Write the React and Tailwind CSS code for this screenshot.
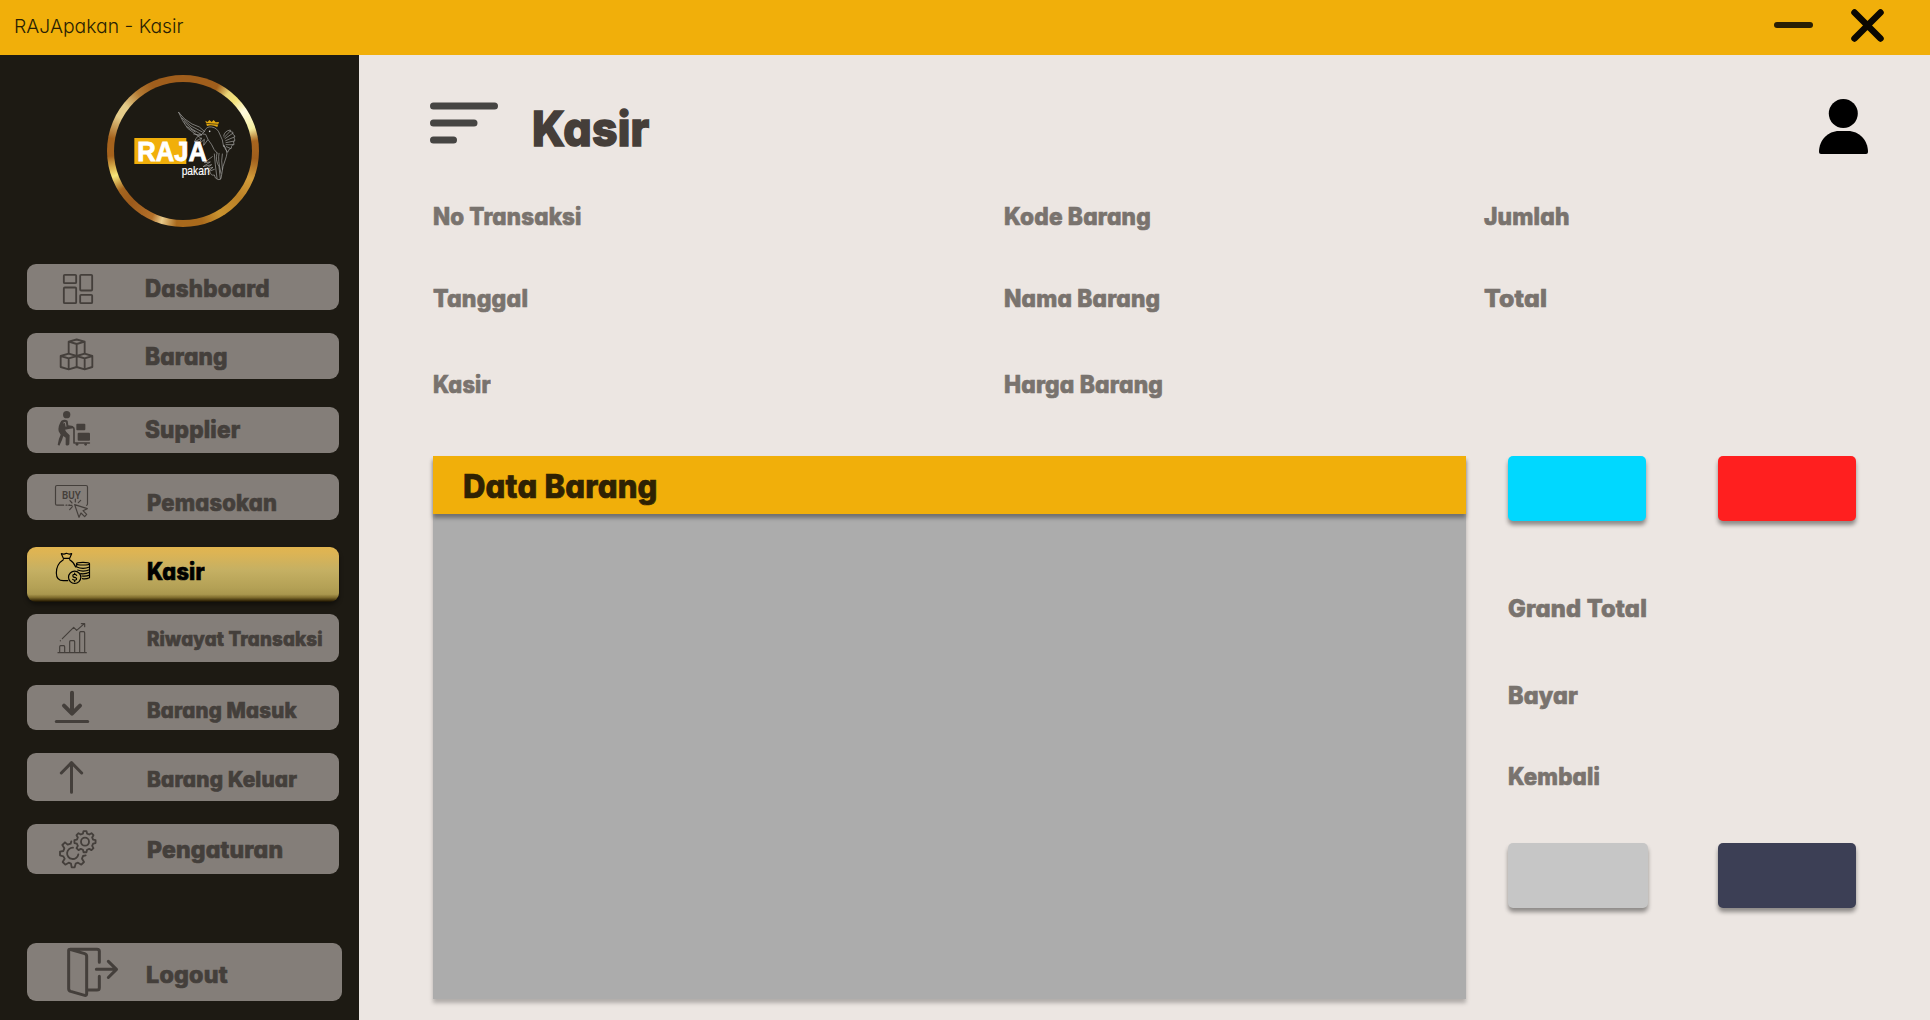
import React, { useLayoutEffect, useRef, useState } from "react";

/* Text condensed or widened so that its run fills the given width. */
function Label({ children, width, className = "" }) {
  const ref = useRef(null);
  const [scale, setScale] = useState(1);
  useLayoutEffect(() => {
    setScale(width / ref.current.offsetWidth);
  }, [children, width]);
  return (
    <span
      ref={ref}
      className={"inline-block origin-left self-start justify-self-start whitespace-nowrap pt-px pl-px leading-none " + className}
      style={{ transform: `scaleX(${scale})` }}
    >
      {children}
    </span>
  );
}

const bold = "font-extrabold tracking-[0.2px] [font-feature-settings:'cv11'] [-webkit-text-stroke:0.7px_currentColor] ";

function gear(cx, cy, r1, r2, teeth, rot) {
  const pts = [];
  const step = (Math.PI * 2) / teeth;
  for (let i = 0; i < teeth; i++) {
    const a = i * step + rot;
    [[-0.32, r1], [-0.17, r2], [0.17, r2], [0.32, r1]].forEach(([o, r]) => {
      pts.push((cx + r * Math.cos(a + o * step)).toFixed(1) + " " + (cy + r * Math.sin(a + o * step)).toFixed(1));
    });
  }
  return "M" + pts.join("L") + "Z";
}

const line = { fill: "none", stroke: "currentColor", strokeLinecap: "round", strokeLinejoin: "round" };

const DashboardIcon = ({ className }) => (
  <svg viewBox="186 69 96 96" className={className} {...line} strokeWidth="5.500">
    <rect x="191.500" y="74.500" width="37" height="25" rx="3" />
    <rect x="191.500" y="112.500" width="37" height="47" rx="3" />
    <rect x="240.500" y="74.500" width="36" height="47" rx="3" />
    <rect x="240.500" y="134.500" width="36" height="25" rx="3" />
  </svg>
);

const BoxesIcon = ({ className }) => (
  <svg viewBox="177 264 105 99" className={className} {...line} strokeWidth="5.500">
    <path d="M206 275L230 268.500L254 275V309M206 275V309M206 275L230 282L254 275M230 282V316" />
    <path d="M182 318L206 311L230 318L254 311L277 318V351L254 358L230 351L206 358L182 351ZM182 318L206 325L230 318L254 325L277 318M206 325V357M230 318V351M254 325V357" />
  </svg>
);

const SupplierIcon = ({ className }) => (
  <svg viewBox="171 60 102 111" className={className} fill="currentColor">
    <circle cx="200" cy="74" r="11" />
    <path d="M184 92Q194 86 203 92L205 106L215 107Q222 108 220 114L195 119L199 126L209 136L208 163Q203 170 197 164L197 143L190 138L186 150L178 167L173 164L177 146L182 134L176 124Q173 108 184 92Z" />
    <path d="M190 99L196 97L198 110" fill="none" stroke="#847e79" strokeWidth="3" />
    <path d="M205 112H218Q222 112 222 117V159H268" {...line} strokeWidth="5" />
    <rect x="229" y="101" width="27" height="20" rx="3" />
    <rect x="233" y="128" width="37" height="24" rx="3" />
    <circle cx="231" cy="163" r="4" />
    <circle cx="257" cy="163" r="4" />
  </svg>
);

const BuyIcon = ({ className }) => (
  <svg viewBox="162 282 105 105" className={className} {...line} strokeWidth="3.500">
    <path d="M191 345.500H171Q166.500 345.500 166.500 341V291Q166.500 286.500 171 286.500H258Q262.500 286.500 262.500 291V341Q262.500 344 260 346M198 345.500H201M206 345.500H209" />
    <path d="M224 344L262 356L249 362L260 373L254 380L243 369L237 382Z" />
    <path d="M226 327V336M210 332L216 339M242 331L235 338M208 346H216M217 350L209 359" />
    <text x="186" y="327" fontSize="33" fontWeight="600" textLength="56" lengthAdjust="spacingAndGlyphs" fill="currentColor" stroke="none" fontFamily="Roboto, sans-serif">BUY</text>
  </svg>
);

const MoneyIcon = ({ className }) => (
  <svg viewBox="165 66 108 99" className={className} {...line} strokeWidth="3.500">
    <path d="M190 85L184 71Q192 74 199 70Q207 74 215 71L209 85ZM190 89Q169 102 169 129Q169 152 190 152H203M209 89Q222 97 227 111" />
    <circle cx="224" cy="142" r="18.500" />
    <path d="M230 136Q224 130 219 135Q217 141 224 142Q232 144 229 149Q224 153 218 148M224 129V133M224 151V155" />
    <ellipse cx="249" cy="101" rx="19.500" ry="4" />
    <path d="M230 101V111Q249 119 268.500 111V101M268.500 111V119Q250 127 233 120M268.500 119V127Q256 133 242 131M268.500 127V135Q258 140 246 138M268.500 135V143Q258 148 247 146" />
  </svg>
);

const ChartIcon = ({ className }) => (
  <svg viewBox="171 276 90 96" className={className} {...line} strokeWidth="3.500">
    <path d="M174 368H259M179 368V350Q179 347 182 347H191Q194 347 194 350V368M209 368V335Q209 332 212 332H221Q224 332 224 335V368M239 368V308Q239 305 242 305H251Q254 305 254 308V368" />
    <path d="M187 326L221 292L230 301L253 281M244 281H254V290M181 332V332.500" />
  </svg>
);

const DownIcon = ({ className }) => (
  <svg viewBox="162 60 108 102" className={className} {...line} strokeWidth="12">
    <path d="M216 68V129M192 107L216 131L240 107" />
    <path d="M169 154.500H263" strokeWidth="9" />
  </svg>
);

const UpIcon = ({ className }) => (
  <svg viewBox="177 270 75 105" className={className} {...line} strokeWidth="9">
    <path d="M214.500 279V367M184 309L214.500 278L245 309" />
  </svg>
);

const GearsIcon = ({ className }) => (
  <svg viewBox="174 57 117 120" className={className} {...line} strokeWidth="5.500">
    <path d={gear(255, 95, 25, 32, 8, 0)} />
    <circle cx="255" cy="95" r="12" />
    <path d="M214 94L212 101L203 104L195 97L187 105L193 115L190 123L180 125V136L190 139L194 146L188 156L196 164L206 158L213 161L215 172H224L227 161L234 158L244 164L252 156L246 146L249 138L257 136" />
    <path d="M219 113A17 17 0 1 0 235 133" />
  </svg>
);

const LogoutIcon = ({ className }) => (
  <svg viewBox="198 411 159 153" className={className} {...line} strokeWidth="9">
    <path d="M206 421Q206 417 212 419L254 431Q260 433 260 439V551Q260 557 254 556L212 544Q206 542 206 536ZM210 417.500H291Q298 417.500 298 424V457M298 499V533Q298 540 291 540H264" />
    <path d="M289 478H349M325 454L349.500 478L325 502.500" />
  </svg>
);

const items = [
  { text: "Dashboard", w: 126, Icon: DashboardIcon, row: "h-[46px]", icon: "ml-[35px] mt-[9px] w-8 h-8", label: "text-[24px] mt-[12px]", col: "grid-cols-[117px_1fr]" },
  { text: "Barang", w: 84, Icon: BoxesIcon, row: "h-[46px] mt-[23px]", icon: "ml-8 mt-[5px] w-[35px] h-[33px]", label: "text-[24px] mt-[11px]", col: "grid-cols-[117px_1fr]" },
  { text: "Supplier", w: 96, Icon: SupplierIcon, row: "h-[46px] mt-7", icon: "ml-[30px] mt-[3px] w-[34px] h-[37px]", label: "text-[24px] mt-[10px]", col: "grid-cols-[117px_1fr]" },
  { text: "Pemasokan", w: 131, Icon: BuyIcon, row: "h-[46px] mt-[21px]", icon: "ml-[27px] mt-[10px] w-[35px] h-[35px]", label: "text-[23px] mt-[17px]", col: "grid-cols-[119px_1fr]" },
  { text: "Kasir", w: 59, Icon: MoneyIcon, active: true, row: "h-[55px] mt-[27px]", icon: "ml-[28px] mt-[5px] w-[36px] h-[33px]", label: "text-[24px] mt-[12px]", col: "grid-cols-[119px_1fr]" },
  { text: "Riwayat Transaksi", w: 177, Icon: ChartIcon, row: "h-[48px] mt-[12px]", icon: "ml-[30px] mt-[8px] w-[30px] h-[32px]", label: "text-[20px] mt-[14px]", col: "grid-cols-[119px_1fr]" },
  { text: "Barang Masuk", w: 151, Icon: DownIcon, row: "h-[45px] mt-[23px]", icon: "ml-[27px] mt-[5px] w-[36px] h-[34px]", label: "text-[21px] mt-[14px]", col: "grid-cols-[119px_1fr]" },
  { text: "Barang Keluar", w: 151.5, Icon: UpIcon, row: "h-[48px] mt-[23px]", icon: "ml-[32px] mt-[7px] w-[25px] h-[35px]", label: "text-[21px] mt-[15px]", col: "grid-cols-[119px_1fr]" },
  { text: "Pengaturan", w: 137, Icon: GearsIcon, row: "h-[50px] mt-[23px]", icon: "ml-[31px] mt-[5px] w-[39px] h-[40px]", label: "text-[23px] mt-[14px]", col: "grid-cols-[119px_1fr]" },
  { text: "Logout", w: 83, Icon: LogoutIcon, row: "h-[58px] mt-[69px] mr-[-3px]", icon: "ml-[39px] mt-[4px] w-[53px] h-[51px]", label: "text-[23px] mt-[20px]", col: "grid-cols-[118px_1fr]" },
];

const Logo = () => (
  <div className="ml-[107px] mt-5 flex size-[152px] shrink-0 items-center justify-center rounded-full bg-[conic-gradient(#a05e1c_0deg,#a05e1c_28deg,#e9d477_38deg,#f3e27c_46deg,#fffbe0_57deg,#f5ee9f_72deg,#a8651f_82deg,#a05e1c_96deg,#d29c3a_112deg,#bb8126_130deg,#c9932f_150deg,#a96a1c_165deg,#a9691c_185deg,#e8cb8c_197deg,#b3702a_205deg,#9c5a1b_225deg,#a5651f_238deg,#f6e67a_250deg,#d9b04c_257deg,#a5621c_266deg,#a5621c_280deg,#e4cc8a_298deg,#e4cc8a_308deg,#b57c35_322deg,#a05e1c_335deg,#a05e1c_360deg)]">
    <div className="flex size-[138px] items-center justify-center rounded-full bg-[#1d1a13]">
      <svg viewBox="395 330 315 215" className="mb-[10px] ml-[2px] h-[71.67px] w-[105px]">
        <rect x="402" y="414" width="156" height="78" fill="#f1af0a" />
        <g fill="none" stroke="#a9a9a7" strokeWidth="2" strokeLinecap="round" strokeLinejoin="round">
          <path d="M535 337L547 362L562 385L585 402L600 413M535 337L553 357L575 372L597 381L612 394M545 354L572 378L606 396M551 364L575 387L604 404M560 380L585 396M580 402L603 406" />
          <path d="M612 394Q618 378 634 381Q652 384 658 402Q668 418 670 440M612 394L606 402L616 403Q622 420 634 434Q640 450 650 459M604 403Q590 405 582 426L604 414L596 432L612 418L610 436L622 420" />
          <path d="M670 408Q672 393 690 390Q686 396 698 397Q694 403 704 408Q698 412 704 421Q697 422 701 434Q693 433 693 445Q687 443 682 457Q674 450 671 436M672 412L690 393M674 416L697 400M676 422L702 411M677 428L702 423M677 434L698 434M678 440L690 445" />
          <path d="M670 436Q684 452 678 470L668 500L662 536Q656 542 650 537Q644 536 642 525Q632 528 630 518M650 459Q644 480 656 500L660 537M642 462Q644 490 650 535M636 470L612 488L630 486L608 500L634 494L614 508L638 502L622 516L642 508M656 460Q652 480 662 520M666 462Q662 480 666 508" />
        </g>
        <circle cx="628" cy="394" r="2.500" fill="#ddd" />
        <path d="M615 362L622 366L627 360L634 366L640 360L646 367L656 366L651 381Q635 373 620 378Z" fill="#e3a80f" />
        <path d="M617 370L654 373" stroke="#1d1a13" strokeWidth="2" />
        <text x="411" y="483" fontSize="82" fontWeight="700" textLength="209" lengthAdjust="spacingAndGlyphs" fill="#fff" stroke="#fff" strokeWidth="2.500" fontFamily="Liberation Sans, Arial, sans-serif">RAJA</text>
        <text x="544" y="524" fontSize="36" textLength="84" lengthAdjust="spacingAndGlyphs" fill="#fff" stroke="#fff" strokeWidth="0.500" fontFamily="Liberation Sans, Arial, sans-serif">pakan</text>
      </svg>
    </div>
  </div>
);

const Sidebar = () => (
  <aside className="flex w-[359px] shrink-0 flex-col bg-[#1d1a13]">
    <Logo />
    <nav className="mt-[37px] flex flex-col pl-[27px] pr-5">
      {items.map(({ text, w, Icon, active, row, icon, label, col }) => (
        <a
          key={text}
          className={
            "grid shrink-0 items-start rounded-[9px] " + row + " " + col + " " +
            (active
              ? "bg-[linear-gradient(#e2b54f_0%,#dcb455_12%,#c5b063_42%,#b3a055_75%,#aa974e_86%,#7d6a2c_92%,#3f300c_97%,#140f03_100%)] text-black shadow-[0_3px_4px_rgba(0,0,0,0.4)]"
              : "bg-[#847e79] text-[#443f3b]")
          }
        >
          <Icon className={icon} />
          <Label width={w} className={bold + label}>{text}</Label>
        </a>
      ))}
    </nav>
  </aside>
);

const fields = [
  ["No Transaksi", 150], ["Kode Barang", 147.5], ["Jumlah", 86.5],
  ["Tanggal", 96], ["Nama Barang", 157], ["Total", 64],
  ["Kasir", 59], ["Harga Barang", 160.5],
];
const fieldLabel = bold + "text-[24px] text-[#79736e] ";
const action = "h-[65px] rounded-[5px] shadow-[0_4px_4px_rgba(0,0,0,0.4)] ";

export default function App() {
  return (
    <div className="flex h-[1020px] w-[1930px] flex-col overflow-hidden bg-[#ece6e2] font-[Inter,sans-serif]">
      <header className="flex h-[55px] shrink-0 items-start bg-[#f1af0a] pl-[13px] text-[#2a1f04]">
        <Label width={170} className="mt-[16px] text-[19px] font-light [font-feature-settings:'cv11']">RAJApakan - Kasir</Label>
        <svg viewBox="0 0 39 6" className="ml-auto mt-[22px] h-[6px] w-[39px]"><rect width="39" height="6" rx="3" fill="#2a1f04" /></svg>
        <svg viewBox="0 0 33 33" className="ml-[38px] mr-[46px] mt-[9px] size-[33px]" {...line} stroke="#0b0802" strokeWidth="6.500"><path d="M3.500 3.500L29.500 29.500M29.500 3.500L3.500 29.500" /></svg>
      </header>
      <div className="flex min-h-0 flex-1">
        <Sidebar />
        <main className="flex flex-1 flex-col">
          <div className="flex h-[149px] items-start pl-[71px] pr-[62px]">
            <svg viewBox="0 0 68 42" className="mt-[47px] h-[42px] w-[68px]" {...line} stroke="#464543" strokeWidth="7"><path d="M3.500 4H64.500M3.500 21H44M3.500 38H23.500" /></svg>
            <Label width={118} className={bold + "ml-[33px] mt-[49px] text-[48px] text-[#453e39] [-webkit-text-stroke:1.5px_currentColor]"}>Kasir</Label>
            <svg viewBox="0 0 49 55" className="ml-auto mt-[44px] h-[55px] w-[49px]"><circle cx="24.300" cy="14.500" r="14.500" /><path d="M0 53C0 41 9 32 20 32H29C40 32 49 41 49 53Q49 55 47 55H2Q0 55 0 53Z" /></svg>
          </div>
          <div className="ml-[73px] grid grid-cols-[571px_480px_1fr] grid-rows-[82px_86px_84px]">
            {fields.map(([t, w]) => (
              <Label key={t} width={w} className={fieldLabel}>{t}</Label>
            ))}
          </div>
          <div className="ml-[74px] flex items-start">
            <section className="flex h-[543px] w-[1033px] flex-col bg-[#acacac] shadow-[0_4px_4px_rgba(0,0,0,0.25)]">
              <div className="flex h-[58px] bg-[#f1af0a] pl-[29px] shadow-[0_4px_4px_rgba(0,0,0,0.35)]">
                <Label width={196} className={bold + "mt-[13px] text-[33px] text-[#2f2203]"}>Data Barang</Label>
              </div>
            </section>
            <section className="ml-[42px] flex flex-col">
              <div className="flex gap-[72px]">
                <button className={action + "w-[138px] bg-[#00d8ff]"} />
                <button className={action + "w-[138px] bg-[#ff1f1f]"} />
              </div>
              <Label width={140} className={fieldLabel + "-ml-px mt-[75px]"}>Grand Total</Label>
              <Label width={71} className={fieldLabel + "-ml-px mt-[62px]"}>Bayar</Label>
              <Label width={93} className={fieldLabel + "-ml-px mt-[56px]"}>Kembali</Label>
              <div className="mt-[54px] flex items-start gap-[70px]">
                <button className={action + "w-[140px] bg-[#c6c6c6]"} />
                <button className={action + "w-[138px] bg-[#3c3f55]"} />
              </div>
            </section>
          </div>
        </main>
      </div>
    </div>
  );
}
